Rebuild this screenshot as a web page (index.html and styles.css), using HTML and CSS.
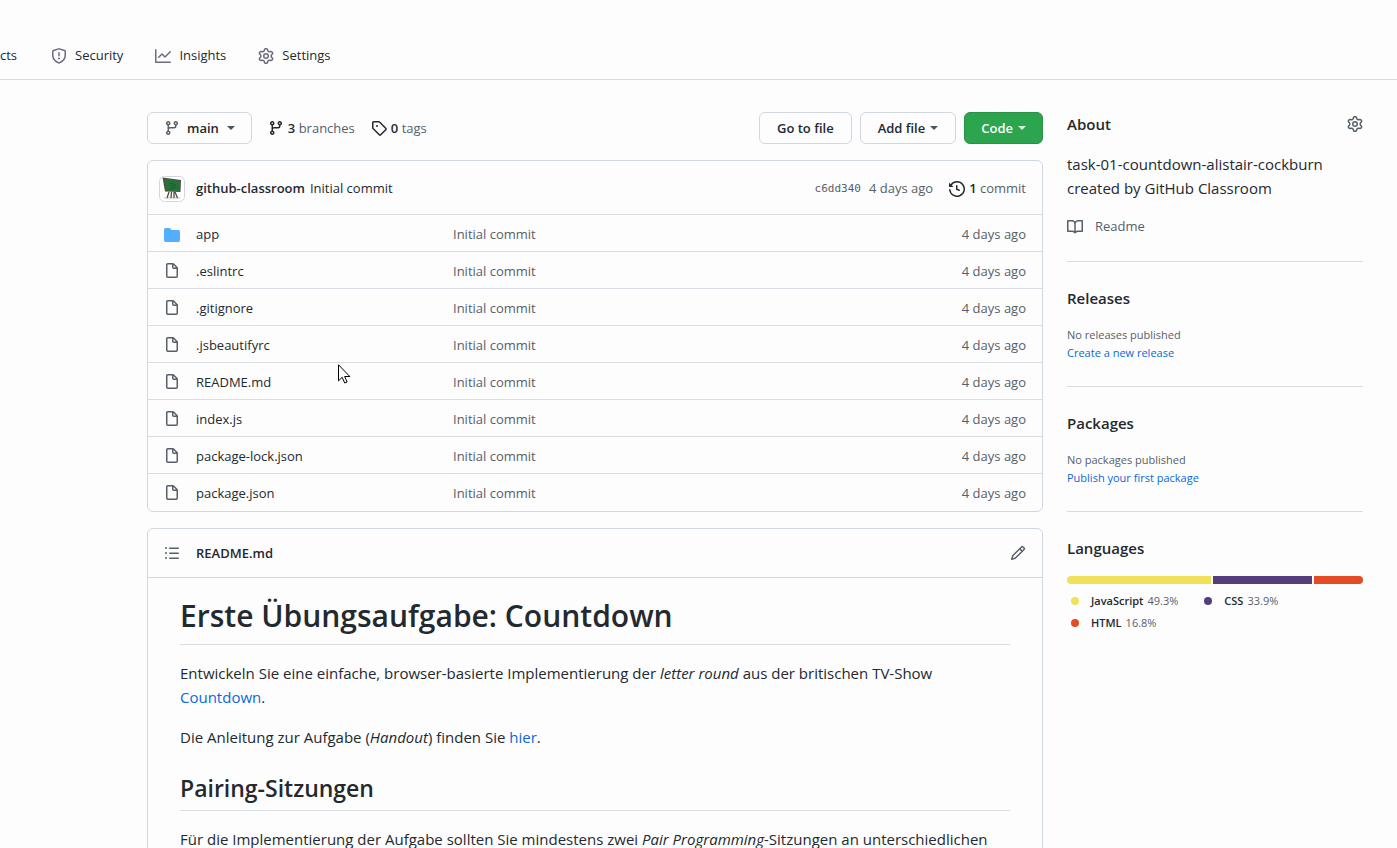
FILE: index.html
```html
<!DOCTYPE html>
<html lang="en">
<head>
<meta charset="utf-8">
<meta name="viewport" content="width=device-width, initial-scale=1">
<title>github-classroom repository</title>
<link rel="stylesheet" href="styles.css">
</head>
<body>
<svg class="sprite" aria-hidden="true">
  <symbol id="i-shield" viewBox="0 0 16 16"><path d="M7.467.133a1.75 1.75 0 0 1 1.066 0l5.25 1.68A1.75 1.75 0 0 1 15 3.48V7c0 1.566-.32 3.182-1.303 4.682-.983 1.498-2.585 2.813-5.032 3.855a1.7 1.7 0 0 1-1.33 0c-2.447-1.042-4.049-2.357-5.032-3.855C1.32 10.182 1 8.566 1 7V3.48a1.75 1.75 0 0 1 1.217-1.667Zm.61 1.429a.25.25 0 0 0-.153 0l-5.25 1.68a.25.25 0 0 0-.174.238V7c0 1.358.275 2.666 1.057 3.86.784 1.194 2.121 2.34 4.366 3.297a.2.2 0 0 0 .154 0c2.245-.956 3.582-2.104 4.366-3.298C13.225 9.666 13.5 8.36 13.5 7V3.48a.25.25 0 0 0-.174-.237l-5.25-1.68ZM8.75 4.75v3a.75.75 0 0 1-1.5 0v-3a.75.75 0 0 1 1.5 0ZM9 10.5a1 1 0 1 1-2 0 1 1 0 0 1 2 0Z"/></symbol>
  <symbol id="i-graph" viewBox="0 0 16 16"><path d="M1.5 1.75a.75.75 0 0 0-1.5 0v12.5c0 .414.336.75.75.75h14.5a.75.75 0 0 0 0-1.5H1.5V1.75zm14.28 2.53a.75.75 0 0 0-1.06-1.06L10 7.94 7.53 5.47a.75.75 0 0 0-1.06 0L3.22 8.72a.75.75 0 0 0 1.06 1.06L7 7.06l2.47 2.47a.75.75 0 0 0 1.06 0l5.25-5.25z"/></symbol>
  <symbol id="i-gear" viewBox="0 0 16 16"><path fill-rule="evenodd" d="M7.429 1.525a6.593 6.593 0 0 1 1.142 0c.036.003.108.036.137.146l.289 1.105c.147.56.55.967.997 1.189.174.086.341.183.501.29.417.278.97.423 1.53.27l1.102-.303c.11-.03.175.016.195.046.219.31.41.641.573.989.014.031.022.11-.059.19l-.815.806c-.411.406-.562.957-.53 1.456a4.588 4.588 0 0 1 0 .582c-.032.499.119 1.05.53 1.456l.815.806c.08.08.073.159.059.19a6.494 6.494 0 0 1-.573.99c-.02.029-.086.074-.195.045l-1.103-.303c-.559-.153-1.112-.008-1.529.27-.16.107-.327.204-.5.29-.449.222-.851.628-.998 1.189l-.289 1.105c-.029.11-.101.143-.137.146a6.613 6.613 0 0 1-1.142 0c-.036-.003-.108-.037-.137-.146l-.289-1.105c-.147-.56-.55-.967-.997-1.189a4.502 4.502 0 0 1-.501-.29c-.417-.278-.97-.423-1.53-.27l-1.102.303c-.11.03-.175-.016-.195-.046a6.492 6.492 0 0 1-.573-.989c-.014-.031-.022-.11.059-.19l.815-.806c.411-.406.562-.957.53-1.456a4.587 4.587 0 0 1 0-.582c.032-.499-.119-1.05-.53-1.456l-.815-.806c-.08-.08-.073-.159-.059-.19a6.44 6.44 0 0 1 .573-.99c.02-.029.086-.075.195-.045l1.103.303c.559.153 1.112.008 1.529-.27.16-.107.327-.204.5-.29.449-.222.851-.628.998-1.189l.289-1.105c.029-.11.101-.143.137-.146zM8 0c-.236 0-.47.01-.701.03-.743.065-1.29.615-1.458 1.261l-.29 1.106c-.017.066-.078.158-.211.224a5.994 5.994 0 0 0-.668.386c-.123.082-.233.09-.3.071L3.27 2.776c-.644-.177-1.392.02-1.82.63a7.977 7.977 0 0 0-.704 1.217c-.315.675-.111 1.422.363 1.891l.815.806c.05.048.098.147.088.294a6.084 6.084 0 0 0 0 .772c.01.147-.038.246-.088.294l-.815.806c-.474.469-.678 1.216-.363 1.891.2.428.436.835.704 1.218.428.609 1.176.806 1.82.63l1.103-.303c.066-.019.176-.011.299.071.213.143.436.272.668.386.133.066.194.158.212.224l.289 1.106c.169.646.715 1.196 1.458 1.26a8.094 8.094 0 0 0 1.402 0c.743-.064 1.29-.614 1.458-1.26l.29-1.106c.017-.066.078-.158.211-.224a5.98 5.98 0 0 0 .668-.386c.123-.082.233-.09.3-.071l1.102.302c.644.177 1.392-.02 1.82-.63.268-.382.505-.789.704-1.217.315-.675.111-1.422-.364-1.891l-.814-.806c-.05-.048-.098-.147-.088-.294a6.1 6.1 0 0 0 0-.772c-.01-.147.039-.246.088-.294l.814-.806c.475-.469.679-1.216.364-1.891a7.992 7.992 0 0 0-.704-1.218c-.428-.609-1.176-.806-1.82-.63l-1.103.303c-.066.019-.176.011-.299-.071a5.991 5.991 0 0 0-.668-.386c-.133-.066-.194-.158-.212-.224L10.16 1.29C9.99.645 9.444.095 8.701.031A8.094 8.094 0 0 0 8 0zm1.5 8a1.5 1.5 0 1 1-3 0 1.5 1.5 0 0 1 3 0zM11 8a3 3 0 1 1-6 0 3 3 0 0 1 6 0z"/></symbol>
  <symbol id="i-branch" viewBox="0 0 16 16"><path fill-rule="evenodd" d="M11.75 2.5a.75.75 0 1 0 0 1.5.75.75 0 0 0 0-1.5zm-2.25.75a2.25 2.25 0 1 1 3 2.122V6A2.5 2.5 0 0 1 10 8.5H6a1 1 0 0 0-1 1v1.128a2.251 2.251 0 1 1-1.5 0V5.372a2.25 2.25 0 1 1 1.5 0v1.836A2.492 2.492 0 0 1 6 7h4a1 1 0 0 0 1-1v-.628A2.25 2.25 0 0 1 9.5 3.25zM4.25 12a.75.75 0 1 0 0 1.5.75.75 0 0 0 0-1.5zM3.5 3.25a.75.75 0 1 1 1.5 0 .75.75 0 0 1-1.5 0z"/></symbol>
  <symbol id="i-tag" viewBox="0 0 16 16"><path fill-rule="evenodd" d="M2.5 7.775V2.75a.25.25 0 0 1 .25-.25h5.025a.25.25 0 0 1 .177.073l6.25 6.25a.25.25 0 0 1 0 .354l-5.025 5.025a.25.25 0 0 1-.354 0l-6.25-6.25a.25.25 0 0 1-.073-.177zm-1.5 0V2.75C1 1.784 1.784 1 2.75 1h5.025c.464 0 .91.184 1.238.513l6.25 6.25a1.75 1.75 0 0 1 0 2.474l-5.026 5.026a1.75 1.75 0 0 1-2.474 0l-6.25-6.25A1.75 1.75 0 0 1 1 7.775zM6 5a1 1 0 1 0 0 2 1 1 0 0 0 0-2z"/></symbol>
  <symbol id="i-history" viewBox="0 0 16 16"><path fill-rule="evenodd" d="M1.643 3.143.427 1.927A.25.25 0 0 0 0 2.104V5.75c0 .138.112.25.25.25h3.646a.25.25 0 0 0 .177-.427L2.715 4.215a6.5 6.5 0 1 1-1.18 4.458.75.75 0 1 0-1.493.154 8.001 8.001 0 1 0 1.6-5.684zM7.75 4a.75.75 0 0 1 .75.75v2.992l2.028.812a.75.75 0 0 1-.557 1.392l-2.5-1A.75.75 0 0 1 7 8.25v-3.5A.75.75 0 0 1 7.75 4z"/></symbol>
  <symbol id="i-folder" viewBox="0 0 16 16"><path d="M1.75 2A1.75 1.75 0 0 0 0 3.75v10.5C0 15.216.784 16 1.75 16h12.5A1.75 1.75 0 0 0 16 14.250v-8.500A1.75 1.75 0 0 0 14.250 4h-6.500a.25.25 0 0 1-.2-.1l-.9-1.200C6.070 2.260 5.550 2 5 2H1.750z"/></symbol>
  <symbol id="i-file" viewBox="0 0 16 16"><path fill-rule="evenodd" d="M3.75 1.5a.25.25 0 0 0-.25.25v11.5c0 .138.112.25.25.25h8.5a.25.25 0 0 0 .25-.25V6H9.75A1.75 1.75 0 0 1 8 4.25V1.5H3.75zm5.75.56v2.19c0 .138.112.25.25.25h2.19L9.5 2.06zM2 1.75C2 .784 2.784 0 3.75 0h5.086c.464 0 .909.184 1.237.513l3.414 3.414c.329.328.513.773.513 1.237v8.086A1.75 1.75 0 0 1 12.25 15h-8.5A1.75 1.75 0 0 1 2 13.25V1.75z"/></symbol>
  <symbol id="i-list" viewBox="0 0 16 16"><path fill-rule="evenodd" d="M2 4a1 1 0 1 0 0-2 1 1 0 0 0 0 2zm3.750-1.500a.75.75 0 0 0 0 1.500h8.500a.75.75 0 0 0 0-1.500h-8.500zm0 5a.75.75 0 0 0 0 1.500h8.500a.75.75 0 0 0 0-1.500h-8.500zm0 5a.75.75 0 0 0 0 1.500h8.500a.75.75 0 0 0 0-1.500h-8.500zM3 8a1 1 0 1 1-2 0 1 1 0 0 1 2 0zm-1 6a1 1 0 1 0 0-2 1 1 0 0 0 0 2z"/></symbol>
  <symbol id="i-pencil" viewBox="0 0 16 16"><path fill-rule="evenodd" d="M11.013 1.427a1.750 1.750 0 0 1 2.474 0l1.086 1.086a1.750 1.750 0 0 1 0 2.474l-8.610 8.610c-.21.21-.47.364-.756.445l-3.251.93a.75.75 0 0 1-.927-.928l.929-3.250a1.750 1.750 0 0 1 .445-.758l8.610-8.610zm1.414 1.060a.25.25 0 0 0-.354 0L10.811 3.750l1.439 1.440 1.263-1.263a.25.25 0 0 0 0-.354l-1.086-1.086zM11.189 6.250 9.750 4.810l-6.286 6.287a.25.25 0 0 0-.064.108l-.558 1.953 1.953-.558a.249.249 0 0 0 .108-.064l6.286-6.286z"/></symbol>
  <symbol id="i-book" viewBox="0 0 16 16"><path fill-rule="evenodd" d="M0 1.750A.75.75 0 0 1 .75 1h4.253c1.227 0 2.317.59 3 1.501A3.744 3.744 0 0 1 11.006 1h4.245a.75.75 0 0 1 .75.75v10.500a.75.75 0 0 1-.75.75h-4.507a2.250 2.250 0 0 0-1.591.659l-.622.621a.75.75 0 0 1-1.060 0l-.622-.621A2.250 2.250 0 0 0 5.258 13H.75a.75.75 0 0 1-.75-.75V1.750zm8.755 3a2.250 2.250 0 0 1 2.250-2.250H14.500v9h-3.757c-.71 0-1.400.201-1.992.572l.004-7.322zm-1.504 7.324.004-5.073-.002-2.253A2.250 2.250 0 0 0 5.003 2.500H1.500v9h3.757a3.750 3.750 0 0 1 1.994.574z"/></symbol>
</svg>

<div class="page">
  <nav class="tabs" aria-label="Repository">
    <a class="tab tab-cut" href="#projects">cts</a>
    <a class="tab" href="#security"><svg class="icon"><use href="#i-shield"/></svg>Security</a>
    <a class="tab" href="#insights"><svg class="icon"><use href="#i-graph"/></svg>Insights</a>
    <a class="tab" href="#settings"><svg class="icon"><use href="#i-gear"/></svg>Settings</a>
  </nav>

  <div class="layout">
    <main class="content">
      <div class="toolbar">
        <button class="btn btn-branch" type="button"><svg class="icon"><use href="#i-branch"/></svg>main<span class="caret"></span></button>
        <a class="stat" href="#branches"><svg class="icon"><use href="#i-branch"/></svg><span><strong>3</strong> branches</span></a>
        <a class="stat" href="#tags"><svg class="icon"><use href="#i-tag"/></svg><span><strong>0</strong> tags</span></a>
        <div class="actions">
          <button class="btn" type="button">Go to file</button>
          <button class="btn" type="button">Add file<span class="caret"></span></button>
          <button class="btn btn-primary" type="button">Code<span class="caret"></span></button>
        </div>
      </div>

      <section class="box" aria-label="Files">
        <div class="commit">
          <svg class="avatar" viewBox="0 0 26 26" aria-hidden="true">
            <rect x=".5" y=".5" width="25" height="25" rx="5" fill="#fff" stroke="#d0d7de"/>
            <ellipse cx="13" cy="22" rx="9" ry="1.500" fill="#dedede"/>
            <path d="M10 16 8 22M12.500 16l-.5 6M15 16l0 6M16 16l2.500 6" stroke="#554a40" stroke-width="1.300"/>
            <path d="m3.500 1.500 18.500 2.500-.5 12-15.500-.5z" fill="#5d4a3c"/>
            <path d="m5 3 16 2-.5 10L7 14.500z" fill="#24733b"/>
            <path d="m11 7.500 5 .5v4l-4 .5M11 9.500l3 .5" fill="none" stroke="#1b5f32"/>
          </svg>
          <a class="author" href="#author">github-classroom</a>
          <a class="message" href="#commit">Initial commit</a>
          <a class="sha" href="#sha">c6dd340</a>
          <span class="muted">4 days ago</span>
          <a class="commits" href="#commits"><svg class="icon"><use href="#i-history"/></svg><span><strong>1</strong> commit</span></a>
        </div>
        <table class="files">
          <tbody>
            <tr><td class="c-icon"><svg class="icon folder"><use href="#i-folder"/></svg></td><td class="c-name"><a href="#app">app</a></td><td><a href="#c">Initial commit</a></td><td class="c-date">4 days ago</td></tr>
            <tr><td class="c-icon"><svg class="icon"><use href="#i-file"/></svg></td><td class="c-name"><a href="#eslintrc">.eslintrc</a></td><td><a href="#c">Initial commit</a></td><td class="c-date">4 days ago</td></tr>
            <tr><td class="c-icon"><svg class="icon"><use href="#i-file"/></svg></td><td class="c-name"><a href="#gitignore">.gitignore</a></td><td><a href="#c">Initial commit</a></td><td class="c-date">4 days ago</td></tr>
            <tr><td class="c-icon"><svg class="icon"><use href="#i-file"/></svg></td><td class="c-name"><a href="#jsbeautifyrc">.jsbeautifyrc</a></td><td><a href="#c">Initial commit</a></td><td class="c-date">4 days ago</td></tr>
            <tr><td class="c-icon"><svg class="icon"><use href="#i-file"/></svg></td><td class="c-name"><a href="#readme">README.md</a></td><td><a href="#c">Initial commit</a></td><td class="c-date">4 days ago</td></tr>
            <tr><td class="c-icon"><svg class="icon"><use href="#i-file"/></svg></td><td class="c-name"><a href="#index">index.js</a></td><td><a href="#c">Initial commit</a></td><td class="c-date">4 days ago</td></tr>
            <tr><td class="c-icon"><svg class="icon"><use href="#i-file"/></svg></td><td class="c-name"><a href="#lock">package-lock.json</a></td><td><a href="#c">Initial commit</a></td><td class="c-date">4 days ago</td></tr>
            <tr><td class="c-icon"><svg class="icon"><use href="#i-file"/></svg></td><td class="c-name"><a href="#package">package.json</a></td><td><a href="#c">Initial commit</a></td><td class="c-date">4 days ago</td></tr>
          </tbody>
        </table>
      </section>

      <section class="box readme" id="readme" aria-label="Readme">
        <div class="readme-head">
          <button class="icon-btn" type="button" aria-label="Table of contents"><svg class="icon"><use href="#i-list"/></svg></button>
          <a class="readme-name" href="#readme">README.md</a>
          <button class="icon-btn edit" type="button" aria-label="Edit"><svg class="icon"><use href="#i-pencil"/></svg></button>
        </div>
        <article class="markdown" lang="de">
          <h1>Erste Übungsaufgabe: Countdown</h1>
          <p>Entwickeln Sie eine einfache, browser-basierte Implementierung der <em>letter round</em> aus der britischen TV-Show <a href="#countdown">Countdown</a>.</p>
          <p>Die Anleitung zur Aufgabe (<em>Handout</em>) finden Sie <a href="#handout">hier</a>.</p>
          <h2>Pairing-Sitzungen</h2>
          <p>Für die Implementierung der Aufgabe sollten Sie mindestens zwei <em>Pair Programming</em>-Sitzungen an unterschiedlichen</p>
        </article>
      </section>
    </main>

    <aside class="sidebar">
      <section>
        <div class="about-head"><h2>About</h2><button class="icon-btn" type="button" aria-label="Edit details"><svg class="icon"><use href="#i-gear"/></svg></button></div>
        <p class="about">task-01-countdown-alistair-cockburn created by GitHub Classroom</p>
        <a class="readme-link" href="#readme"><svg class="icon"><use href="#i-book"/></svg>Readme</a>
      </section>
      <section>
        <h2>Releases</h2>
        <div class="note">No releases published<br><a href="#release">Create a new release</a></div>
      </section>
      <section>
        <h2>Packages</h2>
        <div class="note">No packages published<br><a href="#publish">Publish your first package</a></div>
      </section>
      <section>
        <h2>Languages</h2>
        <div class="bar"><span class="js" style="flex-grow:49.3"></span><span class="css" style="flex-grow:33.9"></span><span class="html" style="flex-grow:16.8"></span></div>
        <ul class="langs">
          <li><i class="dot js"></i><strong>JavaScript</strong> 49.3%</li>
          <li><i class="dot css"></i><strong>CSS</strong> 33.9%</li>
          <li><i class="dot html"></i><strong>HTML</strong> 16.8%</li>
        </ul>
      </section>
    </aside>
  </div>

  <svg class="pointer" viewBox="0 0 13 20" aria-hidden="true"><path d="M.5.8v16l3.700-3.500 2.500 5.700 2.400-1-2.500-5.500h5.200z" fill="#fff" stroke="#000"/></svg>
</div>
</body>
</html>
```

FILE: styles.css
```css
* { box-sizing: border-box; }

body {
  margin: 0;
  background: #fdfdfd;
  color: #24292f;
  font: 13px/21px "Open Sans", "Noto Sans", sans-serif;
}

a { color: inherit; text-decoration: none; }
h1, h2, p, ul { margin: 0; padding: 0; }
h1, h2, strong { font-weight: 600; }
button { font: inherit; color: inherit; cursor: pointer; }

.sprite { display: none; }
.icon { width: 16px; height: 16px; flex: none; fill: #57606a; display: block; }
.muted { color: #57606a; }

.page { position: relative; height: 100vh; overflow: hidden; }

.tabs {
  display: flex;
  align-items: center;
  gap: 32px;
  height: 80px;
  padding-top: 32px;
  border-bottom: 1px solid #d8dbdf;
}
.tab { display: flex; align-items: center; gap: 8px; }
.tabs .icon { fill: #6e6a80; }
.tab-cut { width: 19px; }

.layout {
  display: grid;
  grid-template-columns: minmax(0, 1fr) 296px;
  gap: 24px;
  padding: 32px 34px 32px 147px;
}

.toolbar { display: flex; align-items: center; height: 32px; margin-bottom: 16px; }
.btn {
  display: flex;
  align-items: center;
  height: 32px;
  padding: 0 16px;
  border: 1px solid #d0d7de;
  border-radius: 6px;
  background: #fdfdfd;
  font-weight: 600;
}
.btn-branch .icon { margin-right: 7px; }
.btn-branch .caret { margin-left: 8px; }
.btn-primary { background: #2da44e; border-color: #2a9147; color: #fff; }
.caret { margin-left: 5px; border: 4px solid transparent; border-top-color: currentColor; border-bottom: 0; opacity: .8; }
.stat { display: flex; align-items: center; gap: 4px; margin-left: 16px; color: #57606a; }
.stat strong, .commits strong { color: #24292f; }
.stat .icon, .commits .icon { fill: #24292f; }
.actions { display: flex; gap: 8px; margin-left: auto; }
.actions .btn { padding: 0 17px; }
.actions .btn-primary { padding: 0 16px; }

.box { border: 1px solid #d0d7de; border-radius: 6px; }
.commit { display: flex; align-items: center; height: 53px; padding: 2px 16px 0 11px; }
.avatar { width: 26px; height: 26px; margin-right: 11px; }
.author { font-weight: 600; margin-right: 5px; }
.message { margin-right: auto; }
.sha { font: 11px "DejaVu Sans Mono", monospace; color: #57606a; margin-right: 8px; }
.commits { display: flex; align-items: center; gap: 4px; margin-left: 16px; color: #57606a; }

.files { width: 100%; border-collapse: collapse; table-layout: fixed; color: #57606a; }
.files td { height: 37px; padding: 2px 0 0; border-top: 1px solid #d8dee4; }
.files .c-icon { width: 48px; padding-left: 16px; }
.files .c-name { width: 257px; color: #24292f; }
.files .c-date { width: 120px; padding-right: 16px; text-align: right; }
.files .folder { fill: #54aeff; }

.readme { margin-top: 16px; }
.readme-head { display: flex; align-items: center; height: 49px; padding: 0 16px; border-bottom: 1px solid #d0d7de; }
.readme-name { margin-left: 16px; padding-top: 2px; font-weight: 600; }
.icon-btn { padding: 0; border: 0; background: none; }
.edit { margin-left: auto; }

.markdown { padding: 18px 32px 32px; font-size: 15px; line-height: 24px; }
.markdown h1, .markdown h2 { border-bottom: 1px solid #d8dee4; margin-bottom: 16px; }
.markdown h1 { font-size: 30px; line-height: 40px; padding-bottom: 8px; }
.markdown h2 { font-size: 23px; line-height: 30px; padding-bottom: 7px; margin-top: 24px; }
.markdown p { margin-bottom: 16px; }
.markdown a, .note a { color: #0969da; }

.sidebar section { border-bottom: 1px solid #d8dbdf; padding-bottom: 24px; margin-bottom: 24px; }
.sidebar section:last-child { border: 0; }
.sidebar h2 { font-size: 15px; line-height: 24px; margin-bottom: 16px; }
.about-head { display: flex; justify-content: space-between; }
.about-head .icon-btn { height: 24px; }
.about { font-size: 15px; line-height: 24px; margin-bottom: 16px; }
.readme-link { display: flex; align-items: center; gap: 12px; color: #57606a; }
.note { font-size: 11px; line-height: 18px; color: #57606a; }

.bar { display: flex; gap: 2px; height: 8px; border-radius: 6px; overflow: hidden; margin-bottom: 8px; }
.bar span { flex: 0 0 0; }
.js { background: #f1e05a; }
.css { background: #563d7c; }
.html { background: #e34c26; }
.langs { display: flex; flex-wrap: wrap; gap: 4px 22px; list-style: none; font-size: 11px; line-height: 18px; color: #57606a; }
.langs li { display: flex; align-items: center; gap: 4px; }
.langs strong { color: #24292f; }
.dot { width: 8px; height: 8px; border-radius: 50%; margin: 0 8px 0 4px; }

.pointer { position: absolute; left: 338px; top: 364px; width: 13px; height: 20px; }
```
